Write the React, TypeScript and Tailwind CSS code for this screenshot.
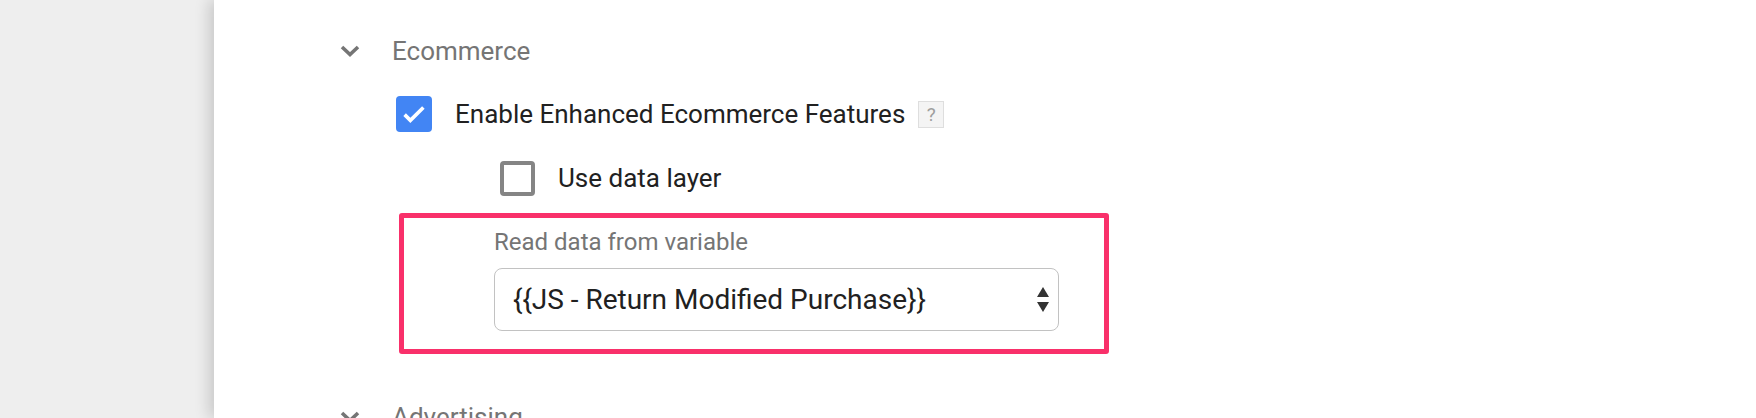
import React from "react";

function Chevron() {
  return (
    <svg width="20" height="12" viewBox="0 0 20 12" className="shrink-0">
      <polyline points="2,2 10,9.5 18,2" fill="none" stroke="#757575" strokeWidth="3.6" strokeLinecap="butt" strokeLinejoin="miter" />
    </svg>
  );
}

function SelectArrows() {
  return (
    <svg width="12" height="25" viewBox="0 0 12 25" className="shrink-0">
      <polygon points="6,0 12,10 0,10" fill="#333333" />
      <polygon points="0,15 12,15 6,25" fill="#333333" />
    </svg>
  );
}

export default function App() {
  return (
    <div
      className="flex h-[418px] w-[1756px] overflow-hidden bg-[#eeeeee]"
      style={{ fontFamily: "Roboto, 'Noto Sans', Arial, sans-serif" }}
    >
      <div className="w-[214px] shrink-0" />
      <div className="relative flex-1 bg-white shadow-[-5px_0_14px_rgba(0,0,0,0.16)]">
        <div className="flex flex-col pt-[36px]">
          {/* Ecommerce header */}
          <div className="flex h-[30px] items-center pl-[126px]">
            <Chevron />
            <span className="ml-[32px] text-[26px] leading-[30px] text-[#757575]">Ecommerce</span>
          </div>

          {/* Enable Enhanced Ecommerce */}
          <div className="mt-[30px] flex h-[36px] items-center pl-[182px]">
            <div className="flex h-[36px] w-[36px] shrink-0 items-center justify-center rounded-[4px] bg-[#4285f4]">
              <svg width="30" height="30" viewBox="0 0 24 24">
                <path d="M4.5 12.5l4.6 4.6L19.5 6.8" fill="none" stroke="#ffffff" strokeWidth="2.9" />
              </svg>
            </div>
            <span className="ml-[23px] text-[26px] leading-[30px] text-[#212121]">
              Enable Enhanced Ecommerce Features
            </span>
            <span className="ml-[13px] flex h-[27px] w-[26px] items-center justify-center border border-[#dedede] bg-[#f4f4f4] text-[19px] leading-none text-[#9e9e9e]">
              ?
            </span>
          </div>

          {/* Use data layer */}
          <div className="mt-[28px] flex h-[36px] items-center pl-[286px]">
            <div className="h-[35px] w-[35px] shrink-0 rounded-[4px] border-[4px] border-[#858585] bg-white" />
            <span className="ml-[23px] text-[26px] leading-[30px] text-[#212121]">Use data layer</span>
          </div>

          {/* Red highlight box */}
          <div className="ml-[185px] mt-[17px] w-[710px] rounded-[3px] border-[5px] border-[#f9306a] pb-[18px] pl-[90px] pt-[10px]">
            <div className="text-[24px] leading-[28px] text-[#757575]">Read data from variable</div>
            <div className="mt-[12px] flex h-[63px] w-[565px] items-center justify-between rounded-[8px] border-[1.5px] border-[#c2c2c2] bg-white pl-[18px] pr-[9px]">
              <span className="text-[28px] leading-[32px] text-[#212121]">{"{{JS - Return Modified Purchase}}"}</span>
              <SelectArrows />
            </div>
          </div>

          {/* Advertising header */}
          <div className="mt-[48px] flex h-[30px] items-center pl-[126px]">
            <Chevron />
            <span className="ml-[32px] text-[26px] leading-[30px] text-[#757575]">Advertising</span>
          </div>
        </div>
      </div>
    </div>
  );
}
